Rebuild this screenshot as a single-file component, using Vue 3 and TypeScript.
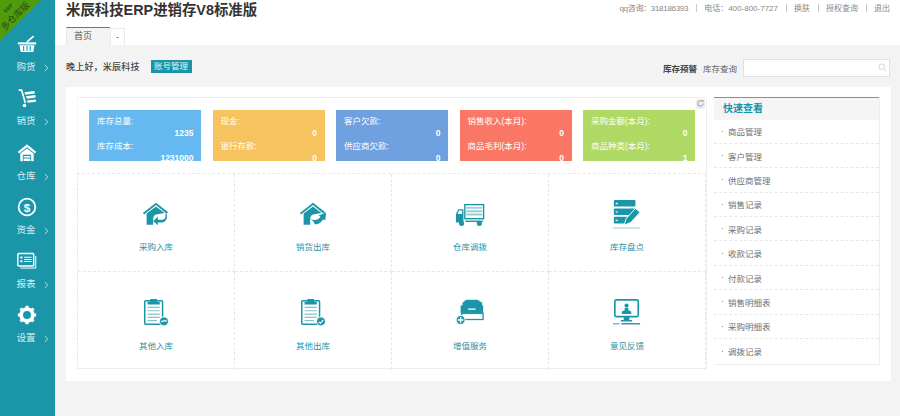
<script setup lang="ts">
const navItems = [
  { label: '购货', icon: 'basket' },
  { label: '销货', icon: 'cart' },
  { label: '仓库', icon: 'store' },
  { label: '资金', icon: 'money' },
  { label: '报表', icon: 'report' },
  { label: '设置', icon: 'gear' }
]
const cards = [
  { color: '#65b9f0', rows: [['库存总量:', '1235'], ['库存成本:', '1231000']] },
  { color: '#f6c35e', rows: [['现金:', '0'], ['银行存款:', '0']] },
  { color: '#6fa0e0', rows: [['客户欠款:', '0'], ['供应商欠款:', '0']] },
  { color: '#fa7766', rows: [['销售收入(本月):', '0'], ['商品毛利(本月):', '0']] },
  { color: '#aed964', rows: [['采购金额(本月):', '0'], ['商品种类(本月):', '1']] }
]
const actions = [
  { label: '采购入库', icon: 'in' },
  { label: '销货出库', icon: 'out' },
  { label: '仓库调拨', icon: 'truck' },
  { label: '库存盘点', icon: 'stock' },
  { label: '其他入库', icon: 'clipIn' },
  { label: '其他出库', icon: 'clipOut' },
  { label: '增值服务', icon: 'drawer' },
  { label: '意见反馈', icon: 'screen' }
]
const quick = ['商品管理', '客户管理', '供应商管理', '销售记录', '采购记录', '收款记录', '付款记录', '销售明细表', '采购明细表', '调拨记录']
const links = ['换肤', '授权查询', '退出']
</script>

<template>
  <div class="page">
    <aside class="side">
      <div class="ribbon">
        <span class="r1">ERP</span>
        <span class="r2">多仓库版</span>
      </div>
      <nav class="nav">
        <a v-for="n in navItems" :key="n.label" class="nav-item">
          <svg class="nav-icon" viewBox="0 0 24 24" fill="#fff">
            <template v-if="n.icon === 'basket'">
              <path d="M1 10h22v2.500H1z" />
              <path d="M3 13.500h18l-1.500 8H4.500z" />
              <path d="M12 9.500 20 2.500" stroke="#fff" stroke-width="2" />
              <path d="M8 14.500v6M12 14.500v6M16 14.500v6" stroke="#1b96a9" stroke-width="1.300" />
            </template>
            <template v-else-if="n.icon === 'cart'">
              <path d="M2 2.500h3.500L10 18" fill="none" stroke="#fff" stroke-width="2" />
              <path d="M9 5 21 3.500l.4 3L9.900 8zM10.500 10 22 8.500l.4 3-10.100 1.500zM12 15l10.500-1.300.4 2.800-10.100 1.300z" />
              <circle cx="9" cy="21" r="2.200" />
            </template>
            <template v-else-if="n.icon === 'store'">
              <path d="M12 1.500 1 10.500l1.500 2L12 5l9.500 7.500 1.500-2z" />
              <path d="M4 12.500 12 6.500l8 6V22H4zM7 14v8h10v-8z" fill-rule="evenodd" />
              <path d="M8 15.500h8v2H8zM8 18.500h8v3H8z" />
            </template>
            <template v-else-if="n.icon === 'money'">
              <circle cx="12" cy="12" r="10" fill="none" stroke="#fff" stroke-width="2.200" />
              <text x="12" y="17.500" text-anchor="middle" class="dollar">$</text>
            </template>
            <template v-else-if="n.icon === 'report'">
              <rect x="1" y="3" width="19" height="15" rx="1" fill="none" stroke="#fff" stroke-width="1.700" />
              <path d="M22.500 6v14.500H4" fill="none" stroke="#fff" stroke-width="1.200" />
              <path d="M4 6.500h2.500V9H4zM4 11h2.500v2.500H4zM8.500 7h9v1.200h-9zM8.500 9.500h9v1.200h-9zM8.500 12h9v1.200h-9z" />
            </template>
            <template v-else>
              <circle cx="12" cy="12" r="7" fill="none" stroke="#fff" stroke-width="4.500" />
              <path d="M12 1v22M1 12h22M4.200 4.200l15.600 15.600M19.800 4.200 4.200 19.800" stroke="#fff" stroke-width="3.800" stroke-dasharray="3.800 14.400" />
            </template>
          </svg>
          <span class="nav-label">{{ n.label }}<svg class="chev" viewBox="0 0 6 10"><path d="M1 1l3.500 4L1 9" fill="none" stroke="#cfe9ee" stroke-width="1" /></svg></span>
        </a>
      </nav>
    </aside>

    <div class="body">
      <header class="top">
        <div class="top-row">
          <h1 class="title">米辰科技ERP进销存V8标准版</h1>
          <div class="contact">
            <span class="qq">qq咨询：318186393</span><i></i>
            <span>电话：400-800-7727</span>
            <template v-for="l in links" :key="l"><i></i><span class="link">{{ l }}</span></template>
          </div>
        </div>
        <div class="tabs">
          <span class="tab on">首页</span>
          <span class="tab more">-</span>
        </div>
      </header>

      <main class="main">
        <div class="bar">
          <div class="hello">
            <span>晚上好，米辰科技</span>
            <a class="account">账号管理</a>
          </div>
          <div class="search">
            <b>库存预警</b>
            <span>库存查询</span>
            <div class="input">
              <svg viewBox="0 0 12 12" class="mag"><circle cx="5" cy="5" r="3.700" fill="none" stroke="#bcccd0" /><path d="M8 8l3 3" stroke="#bcccd0" /></svg>
            </div>
          </div>
        </div>

        <section class="panel">
          <div class="content">
            <span class="refresh">
              <svg viewBox="0 0 10 10"><path d="M8 5a3 3 0 1 1-1-2.300" fill="none" stroke="#aaa" stroke-width="1.300" /><path d="M5.500 1h3v3z" fill="#aaa" /></svg>
            </span>
            <div class="cards">
              <div v-for="c in cards" :key="c.rows[0][0]" class="card" :style="{ background: c.color }">
                <div v-for="r in c.rows" :key="r[0]" class="card-row">
                  <div class="card-label">{{ r[0] }}</div>
                  <div class="card-val">{{ r[1] }}</div>
                </div>
              </div>
            </div>
            <div class="grid">
              <a v-for="a in actions" :key="a.label" class="cell">
                <svg class="act" viewBox="0 0 32 32" fill="#1b96a9">
                  <template v-if="a.icon === 'in' || a.icon === 'out'">
                    <path d="M16 4 2 15l1.300 1.500L16 6.500l11 9 2-1.500z" />
                    <path d="M6 15.500 16 8l9 7-9 1.500c-2.500 1-3 3-3 5v6H6z" />
                    <path d="M27 15c2 5 0 9-4 10H18v3l-5-4.500 5-4.500v3h5c3 0 3.500-3 3-6z" v-if="a.icon === 'in'" />
                    <path d="M13 21c4 2 8 2 11-2l-2-1.500 8-3-1 8.500-2-1.500c-3 4-6 5.500-8 5.500H18c-1-3-3-4.500-5-6z" v-else />
                  </template>
                  <template v-else-if="a.icon === 'truck'">
                    <rect x="10.500" y="6" width="20" height="15" fill="none" stroke="#1b96a9" stroke-width="1.500" />
                    <path d="M12 8.500h17v2H12zM12 12h17v2H12zM12 15.500h17v2H12z" opacity=".45" />
                    <path d="M9 11H3.500L1 16v9h8z" />
                    <path d="M4.300 12.300H7.500V16H2.800z" fill="#fff" />
                    <path d="M11 23h19v1.500H11z" />
                    <circle cx="7" cy="26" r="2.700" /><circle cx="26" cy="26" r="2.700" />
                  </template>
                  <template v-else-if="a.icon === 'stock'">
                    <rect x="2" y="1" width="23" height="7" rx="1" />
                    <rect x="2" y="10" width="23" height="7" rx="1" />
                    <rect x="2" y="19" width="14" height="7" rx="1" />
                    <path d="M4 4h2v1.500H4zM4 13h2v1.500H4zM4 22h2v1.500H4z" fill="#fff" />
                    <path d="M13 28 15 21 25 10l5 4-10 11z" stroke="#fff" stroke-width="1" />
                    <path d="M1 30.500h29v.8H1z" opacity=".6" />
                  </template>
                  <template v-else-if="a.icon === 'clipIn' || a.icon === 'clipOut'">
                    <rect x="4" y="4" width="19" height="25" rx="1" fill="none" stroke="#1b96a9" stroke-width="1.600" />
                    <path d="M10 5V2h7v3h3v3H7V5z" />
                    <path d="M7 10.500h13v1.300H7zM7 14h13v1.300H7zM7 17.500h13v1.300H7zM7 21h13v1.300H7zM7 24.500h10v1.300H7z" opacity=".55" />
                    <circle cx="24.500" cy="26" r="4.800" stroke="#fff" stroke-width="1" />
                    <path d="M21.500 26.500c1.500-1.500 3-1 6-1" fill="none" stroke="#fff" stroke-width="1.200" v-if="a.icon === 'clipIn'" />
                    <path d="M22 26.500l2 1.500 3-3.500" fill="none" stroke="#fff" stroke-width="1.200" v-else />
                  </template>
                  <template v-else-if="a.icon === 'drawer'">
                    <path d="M8 6l4-3h12l5 3v4H8z" />
                    <rect x="6" y="9" width="24" height="8" />
                    <rect x="7" y="17.500" width="23" height="6.500" fill="none" stroke="#1b96a9" stroke-width="1.400" />
                    <path d="M14 12.200h8v1.400h-8zM14 20h8v1.400h-8z" fill="#fff" />
                    <circle cx="6" cy="24.500" r="4.800" stroke="#fff" />
                    <path d="M3 23.800h6v1.400H3z M5.300 21.500h1.400v6H5.300z" fill="#fff" />
                  </template>
                  <template v-else>
                    <rect x="3" y="3" width="25" height="18" rx="1.500" fill="none" stroke="#1b96a9" stroke-width="1.800" />
                    <circle cx="15.500" cy="9" r="2.200" />
                    <path d="M13.500 11.500h4v2.500l3 1.500V18H10.500v-2.500l3-1.500z" />
                    <path d="M12.500 21h6v3.500h3V26h-12v-1.500h3z" />
                    <path d="M1 28h7v1.200H1z" opacity=".8" />
                    <path d="M10 28h20v1.200H10z" fill="#1e5fa5" />
                  </template>
                </svg>
                <span class="act-label">{{ a.label }}</span>
              </a>
            </div>
          </div>

          <aside class="quick">
            <h2 class="quick-head">快速查看</h2>
            <ul class="quick-list">
              <li v-for="q in quick" :key="q"><em></em>{{ q }}</li>
            </ul>
          </aside>
        </section>
      </main>
    </div>
  </div>
</template>

<style>
html, body { margin: 0; padding: 0; background: #f3f3f3; }
</style>

<style scoped>
.page {
  display: flex;
  width: 900px;
  height: 416px;
  overflow: hidden;
  font-family: "Liberation Sans", "Noto Sans CJK SC", sans-serif;
  font-size: 8.500px;
  color: #666;
}
.side {
  position: relative;
  flex: 0 0 55px;
  background: #1b96a9;
}
.ribbon {
  position: absolute;
  left: 0;
  top: 0;
  width: 41px;
  height: 41px;
  background: linear-gradient(135deg, #4f9c0c 0, #4f9c0c 80%, #74c400 80%);
  clip-path: polygon(0 0, 100% 0, 0 100%);
  color: #2c4d12;
}
.r1, .r2 {
  position: absolute;
  white-space: nowrap;
  transform: translate(-50%, -50%) rotate(-45deg);
}
.r1 {
  left: 7.500px;
  top: 7.500px;
  font-size: 5px;
  font-weight: bold;
}
.r2 {
  left: 14.500px;
  top: 15.500px;
  font-size: 9px;
}
.nav {
  display: flex;
  flex-direction: column;
  padding-top: 34px;
}
.nav-item {
  display: flex;
  flex-direction: column;
  align-items: center;
  height: 54.300px;
  color: #d6edf1;
}
.nav-icon { width: 20px; height: 20px; margin-left: -2px; }
.dollar { font: bold 14px "Liberation Sans", sans-serif; fill: #fff; }
.nav-label {
  position: relative;
  margin-top: 6px;
  margin-left: -3px;
  font-size: 9.500px;
  line-height: 14px;
}
.chev {
  position: absolute;
  left: 28px;
  top: 4px;
  width: 5px;
  height: 8px;
}
.body {
  flex: 1;
  display: flex;
  flex-direction: column;
  min-width: 0;
}
.top {
  height: 45px;
  background: #fff;
  padding-left: 11px;
  box-sizing: border-box;
}
.top-row {
  display: flex;
  justify-content: space-between;
  height: 27px;
  padding-right: 10px;
}
.title {
  margin: 0;
  font-size: 14.400px;
  line-height: 21px;
  color: #333;
  font-weight: bold;
}
.contact {
  display: flex;
  align-items: center;
  height: 15px;
  color: #888;
  font-size: 8px;
}
.contact i {
  width: 1px;
  height: 8px;
  margin: 0 7.500px;
  background: #ccc;
}
.qq { letter-spacing: -.3px; }
.tabs { display: flex; height: 18px; }
.tab { box-sizing: border-box; line-height: 17px; color: #555; }
.tab.on {
  width: 44px;
  padding-left: 7px;
  font-size: 9px;
  background: #f3f3f3;
  border-top: 1px solid #1b96a9;
  border-left: 1px solid #e6e6e6;
}
.tab.more {
  width: 15px;
  margin-top: 1px;
  text-align: center;
  border: 1px solid #eaeaea;
  border-bottom: 0;
}
.main {
  flex: 1;
  padding: 0 9px 0 11px;
}
.bar {
  display: flex;
  justify-content: space-between;
  align-items: center;
  height: 42px;
  padding-top: 1px;
  box-sizing: border-box;
}
.hello {
  display: flex;
  align-items: center;
  gap: 11px;
  font-size: 9px;
  color: #444;
  font-weight: 500;
  letter-spacing: .2px;
}
.account {
  width: 41px;
  height: 13px;
  background: #1b96a9;
  color: #e4f4f6;
  text-align: center;
  line-height: 13px;
  font-size: 8.500px;
  font-weight: 400;
  letter-spacing: 0;
}
.search {
  display: flex;
  align-items: center;
  margin: 2px 1px 0 0;
  color: #666;
}
.search b { color: #444; margin-right: 6px; }
.input {
  display: flex;
  align-items: center;
  justify-content: flex-end;
  width: 147px;
  height: 18px;
  margin-left: 6px;
  padding-right: 2px;
  box-sizing: border-box;
  background: #fff;
  border: 1px solid #dde3e8;
}
.mag { width: 9px; height: 9px; }
.panel {
  display: flex;
  gap: 7px;
  width: 825px;
  height: 294px;
  padding: 10px 11px 0;
  box-sizing: border-box;
  background: #fff;
}
.content {
  position: relative;
  width: 631px;
  height: 272px;
  border: 1px solid #eee;
  border-left-color: #f7f7f7;
  box-sizing: border-box;
}
.refresh {
  position: absolute;
  right: 1px;
  top: 1px;
  width: 9px;
  height: 10px;
  background: #eee;
}
.refresh svg { display: block; width: 9px; height: 9px; }
.cards {
  display: flex;
  gap: 11.500px;
  height: 75px;
  padding: 12px 0 0 11px;
  box-sizing: border-box;
}
.card {
  width: 112px;
  height: 51px;
  overflow: hidden;
  padding: 4.500px 7.500px 0 8px;
  box-sizing: border-box;
  color: #fff;
}
.card-row { height: 25.500px; }
.card-label { line-height: 13px; }
.card-val { margin-top: -1px; text-align: right; font-weight: bold; line-height: 12px; }
.grid {
  display: grid;
  grid-template-columns: 157px 157px 157px 157px;
  grid-template-rows: 98px 98px;
  margin-left: -1px;
  border-top: 1px dashed #e8e8e8;
  border-left: 1px dashed #e8e8e8;
}
.cell {
  display: flex;
  flex-direction: column;
  align-items: center;
  padding-top: 25px;
  box-sizing: border-box;
  border-right: 1px dashed #e8e8e8;
  border-bottom: 1px dashed #e8e8e8;
}
.cell:nth-child(n + 5) { border-bottom: 0; }
.act { width: 30px; height: 30px; }
.act-label { margin-top: 12px; line-height: 13px; color: #2a93a6; }
.cell:nth-child(n + 5) .act-label { margin-top: 13px; }
.quick {
  width: 167px;
  height: 268px;
  box-sizing: border-box;
  border-right: 1px solid #eee;
  border-bottom: 1px solid #eee;
}
.quick-head {
  margin: 0;
  height: 22.500px;
  padding-left: 9px;
  line-height: 22px;
  font-size: 10px;
  color: #1b96a9;
  background: #f5f5f5;
  border-top: 1px solid #4fa5b5;
  box-sizing: border-box;
}
.quick-list { margin: 0; padding: 0; list-style: none; }
.quick-list li {
  display: flex;
  align-items: center;
  height: 24.400px;
  box-sizing: border-box;
  padding-left: 7.500px;
  border-bottom: 1px dashed #e8e8e8;
  color: #707070;
}
.quick-list li:last-child { border-bottom: 0; }
.quick-list em {
  width: 1px;
  height: 1px;
  margin-right: 5.500px;
  background: #888;
}
</style>
